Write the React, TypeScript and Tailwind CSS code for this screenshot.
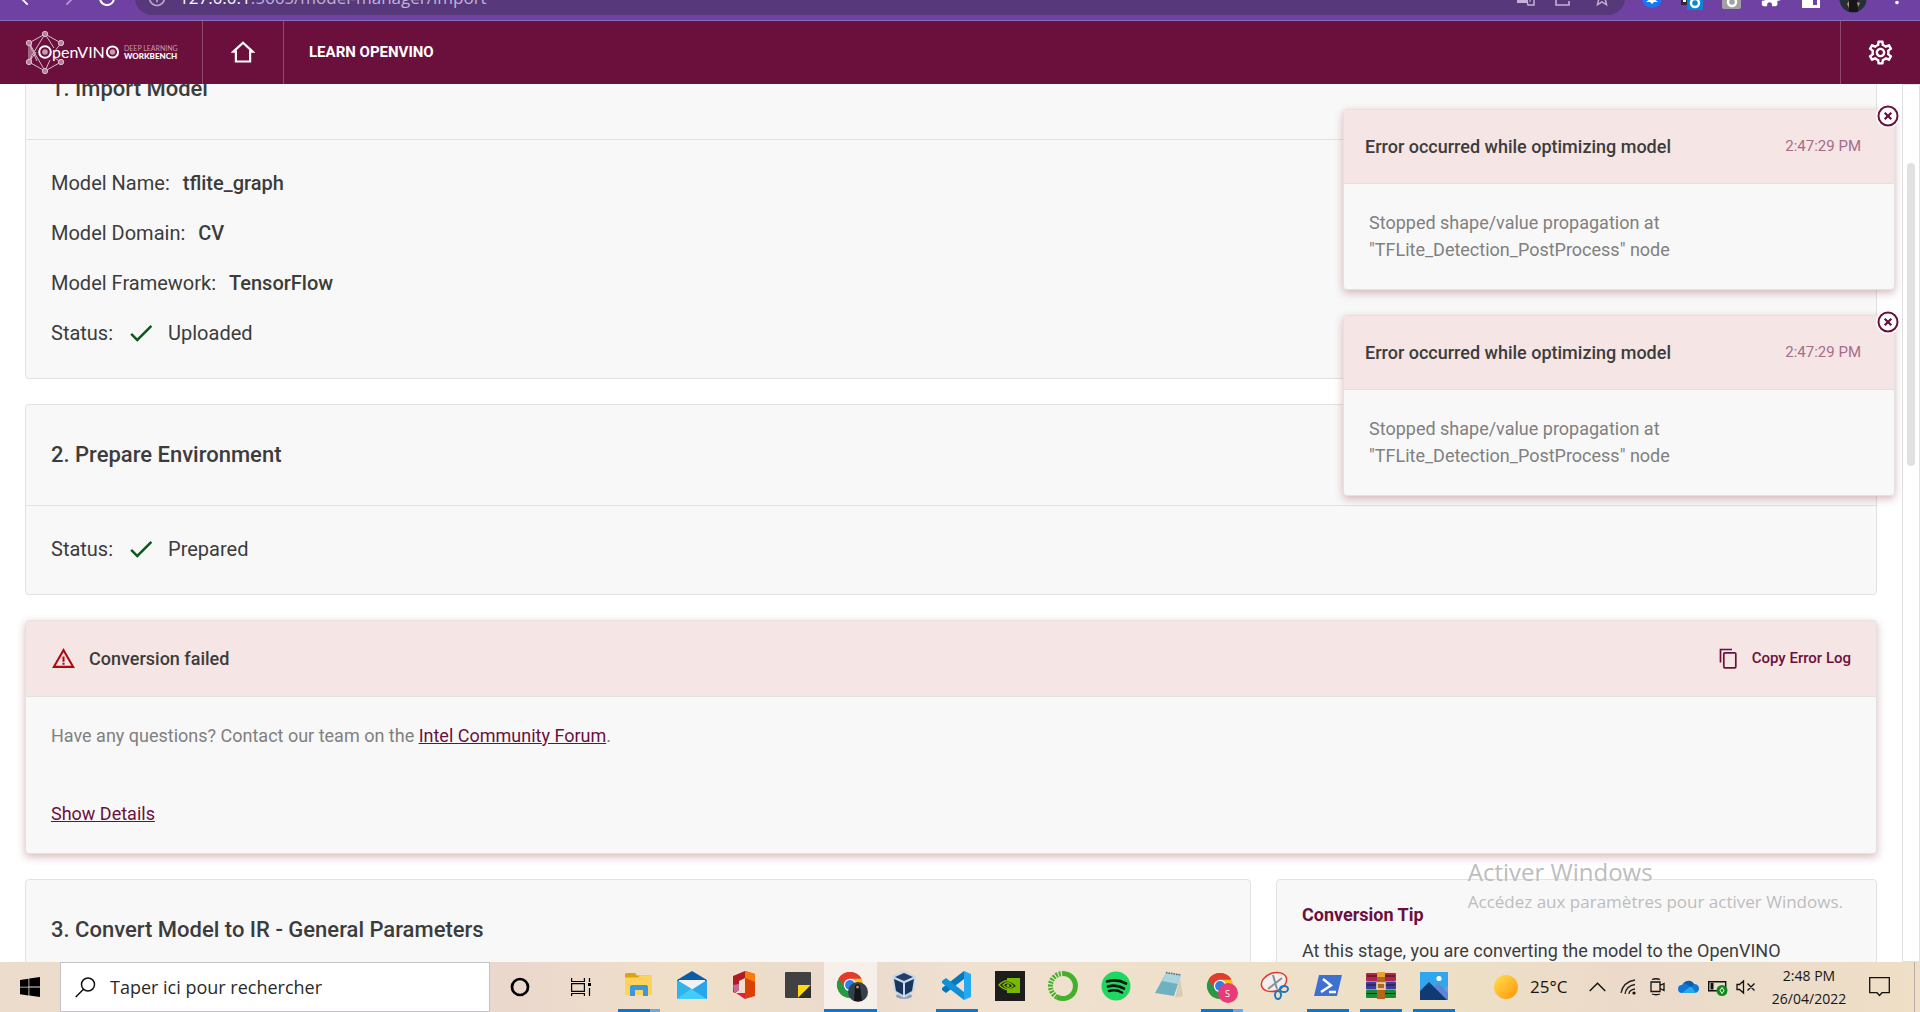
import type { ReactNode } from 'react';
import { MdArrowBack, MdArrowForward, MdRefresh, MdInfoOutline, MdOutlineSettings, MdCheck, MdWarningAmber, MdExtension, MdStarBorder, MdMoreVert } from 'react-icons/md';

const ROBOTO = "font-[Roboto,'Liberation_Sans',sans-serif]";
const SEGOE = "font-['Open_Sans','Noto_Sans',sans-serif]";

function BrowserBar() {
  return (
    <div className={`flex h-[21px] shrink-0 items-end overflow-hidden border-b border-[#8d6cb8] bg-[#6e41a2] text-white ${SEGOE}`}>
      <div className="flex h-9 w-[135px] items-center justify-between pr-4 pl-4 pb-2">
        <button aria-label="Back"><MdArrowBack size={22} /></button>
        <button aria-label="Forward" className="text-[#b39bd0]"><MdArrowForward size={22} /></button>
        <button aria-label="Reload"><MdRefresh size={24} /></button>
      </div>
      <div className="mb-[5px] flex h-[34px] flex-1 items-center rounded-full bg-[#57387b] pr-3 pl-3 text-[#c3b3d6]">
        <MdInfoOutline size={20} className="text-[#b8a8c8]" />
        <span className="ml-3 text-[17px] leading-6"><span className="text-white">127.0.0.1</span>:5665/model-manager/import</span>
        <span className="ml-auto flex items-center gap-5">
          <svg width="18" height="20" viewBox="0 0 18 20"><path d="M0 2h11v13H0z" fill="#c3b3d6" /><path d="M8 6h9v11h-6z" fill="none" stroke="#c3b3d6" strokeWidth="1.5" /><path d="M11 10h4M13 10v4" stroke="#c3b3d6" /></svg>
          <svg width="16" height="20" viewBox="0 0 16 20" fill="none" stroke="#c3b3d6" strokeWidth="1.600"><path d="M6 3H1v14h13v-4M5 12q1-6 7-6M9 3l4 3-4 3" /></svg>
          <MdStarBorder size={22} />
        </span>
      </div>
      <div className="flex h-10 w-[295px] items-center justify-between pr-3 pl-[17px] pb-[3px]">
        <svg width="20" height="30" viewBox="0 0 20 30"><circle cx="10" cy="14" r="10" fill="#1877f2" /><path d="M10 9l2 6 4 3-4 0-2 2-2-2H4l4-3z" fill="#fff" /></svg>
        <svg width="22" height="24" viewBox="0 0 22 24"><path d="M0 2h9v16H0z" fill="#2b2b3a" /><path d="M2 6h3v9H2z" fill="#fff" /><path d="M6 6h16v17H6z" fill="#0a84d8" /><circle cx="14" cy="16" r="4" fill="none" stroke="#fff" strokeWidth="2.5" /></svg>
        <svg width="19" height="24" viewBox="0 0 19 24"><rect width="19" height="22" rx="2" fill="#a3a0a3" /><circle cx="10" cy="15" r="4" fill="none" stroke="#fff" strokeWidth="2.5" /></svg>
        <MdExtension size={22} className="mb-1" />
        <svg width="18" height="24" viewBox="0 0 18 24"><path d="M1.500 3h15v16.500h-15z" fill="none" stroke="#fff" strokeWidth="3" /><path d="M9 3h7v11H9z" fill="#fff" /><path d="M11 4h4v13h-4z" fill="#6e41a2" /><path d="M2 4h9v15H2z" fill="#fff" /></svg>
        <svg width="28" height="28" viewBox="0 0 28 28"><circle cx="14" cy="14" r="13.5" fill="#22303a" /><path d="M10 12h9v15h-9z" fill="#15161c" /><path d="M8 19l2-3v7zM18 17l3 1-2 4z" fill="#c98b6a" /></svg>
        <MdMoreVert size={22} className="mb-1" />
      </div>
    </div>
  );
}

function Logo() {
  return (
    <svg width="154" height="46" viewBox="0 0 154 46" className="text-white" fill="none" role="img" aria-label="OpenVINO Deep Learning Workbench">
      <g stroke="#d9bccb" strokeWidth="1">
        <path d="M21 4L5 13v19l16 9 16-9M21 4l16 9" />
        <path d="M21 4L10 22l11 19M21 4l9 14M5 13l5 8-5 11M5 13l8 18M37 13l-6 8M37 32l-8-5M5 32l7-10M7 13v18M21 41l5-11" />
      </g>
      <g fill="#b4809a" stroke="#d9bccb">
        <circle cx="21" cy="4" r="2.7" /><circle cx="5" cy="13" r="2.7" /><circle cx="37" cy="13" r="2.7" />
        <circle cx="5" cy="32" r="2.7" /><circle cx="37" cy="32" r="2.7" /><circle cx="21" cy="41" r="2.7" />
      </g>
      <circle cx="21" cy="22" r="5.800" fill="#6b103c" stroke="#fff" strokeWidth="2" />
      <circle cx="21" cy="22" r="2.8" fill="#c79bb0" />
      <text x="28" y="28" fill="#fff" fontFamily="Lato, sans-serif" fontSize="16">penVIN</text>
      <circle cx="88.500" cy="22" r="5.600" stroke="#fff" strokeWidth="2" />
      <circle cx="88.500" cy="22" r="2.8" fill="#c79bb0" />
      <text x="100" y="21" fill="#c79bb0" fontFamily="Lato, sans-serif" fontSize="7">DEEP LEARNING</text>
      <text x="100" y="28.500" fill="#fff" fontFamily="Lato, sans-serif" fontSize="8" fontWeight="900">WORKBENCH</text>
    </svg>
  );
}

function AppHeader() {
  return (
    <header className="flex h-[63px] shrink-0 items-stretch bg-[#6b103c] text-white">
      <a href="#home" className="flex w-[203px] items-center border-r border-[#8f4a6b] pl-6"><Logo /></a>
      <a href="#start" aria-label="Home" className="flex w-[81px] items-center justify-center border-r border-[#8f4a6b]">
        <svg width="24" height="24" viewBox="0 0 24 24" fill="none" stroke="#fff" strokeWidth="2.2"><path d="M12 1.7L2.400 10.600h2.500V20.500h14.200v-9.900h2.500z" /></svg>
      </a>
      <nav className="flex items-center pl-[25px]">
        <a href="#learn" className="text-[15px] font-bold">LEARN OPENVINO</a>
      </nav>
      <button aria-label="Settings" className="ml-auto flex w-20 items-center justify-center border-l border-[#8f4a6b]"><MdOutlineSettings size={29} /></button>
    </header>
  );
}

function Card({ title, children }: { title: string; children?: ReactNode }) {
  return (
    <section className="rounded-[4px] border border-[#e2e2e2] bg-[#f8f8f8]">
      <h2 className="flex h-[101px] items-center border-b border-[#e2e2e2] px-[25px] pb-0.5 text-[22px] font-medium">{title}</h2>
      {children}
    </section>
  );
}

function Field({ label, value }: { label: string; value: string }) {
  return (
    <div className="flex h-[50px] items-center gap-[13px]">
      <dt>{label}:</dt>
      <dd className="font-medium">{value}</dd>
    </div>
  );
}

function Status({ value }: { value: string }) {
  return (
    <div className="flex h-[50px] items-center gap-[13px]">
      <dt>Status:</dt>
      <dd className="flex items-center gap-3"><MdCheck size={30} className="text-[#0b5a1c]" />{value}</dd>
    </div>
  );
}

function ErrorCard() {
  return (
    <section className="rounded-[4px] border border-[#e2e2e2] bg-[#f8f8f8] shadow-[0_3px_8px_rgba(130,30,40,0.3)]">
      <div className="flex h-[76px] items-center border-b border-[#e2e2e2] bg-[#f5e5e4] px-[25px]">
        <MdWarningAmber size={25} className="text-[#b00a0f]" />
        <h3 className="ml-[13px] text-[18px] font-medium">Conversion failed</h3>
        <button className="ml-auto flex items-center gap-[15px] text-[15px] font-medium text-[#6b103c]">
          <svg width="18" height="21" viewBox="0 0 18 21" fill="none" stroke="currentColor" strokeWidth="1.7"><path d="M13 1.5H1.5v13" /><rect x="4.8" y="4.8" width="12" height="15" rx="1" /></svg>
          Copy Error Log
        </button>
      </div>
      <div className="px-[25px] pt-[27px] pb-[27px] text-[18px] leading-6 text-[#808080]">
        <p>Have any questions? Contact our team on the <a href="#forum" className="text-[#6b103c] underline">Intel Community Forum</a>.</p>
        <button className="mt-[54px] text-[#6b103c] underline">Show Details</button>
      </div>
    </section>
  );
}

function Toast() {
  return (
    <section role="alert" className="relative rounded-[4px] border border-[#e2e2e2] bg-[#f8f8f8] shadow-[0_3px_8px_rgba(130,30,40,0.3)]">
      <div className="flex h-[74px] items-center justify-between border-b border-[#e2e2e2] bg-[#f5e5e4] pr-[33px] pb-px pl-[21px]">
        <h3 className="text-[18px] font-medium">Error occurred while optimizing model</h3>
        <time className="text-[15px] text-[#a56c8b]">2:47:29 PM</time>
      </div>
      <p className="w-[380px] pt-[25px] pb-[26px] pl-[25px] text-[18px] leading-[27px] text-[#808080]">Stopped shape/value propagation at "TFLite_Detection_PostProcess" node</p>
      <button aria-label="Close" className="absolute -top-1.5 -right-1.5 rounded-full bg-white">
        <svg width="24" height="24" viewBox="0 0 24 24" fill="none" stroke="#6b103c" strokeWidth="2"><circle cx="12" cy="12" r="9.5" /><path d="M8.7 8.7l6.6 6.6M15.3 8.7l-6.6 6.6" strokeWidth="2.2" /></svg>
      </button>
    </section>
  );
}

function ChromeMark() {
  return (
    <g>
      <circle cx="13" cy="14" r="13" fill="#fbc116" />
      <path d="M13 14L1.7 7.5A13 13 0 0 1 24.3 7.5H13z" fill="#e33b2e" />
      <path d="M1.7 7.5A13 13 0 0 0 13 27l5.6-9.7L13 14z" fill="#279847" />
      <path d="M13 7.5h11.3A13 13 0 0 0 1.7 7.5L7 16z" fill="#e33b2e" />
      <circle cx="13" cy="14" r="6.2" fill="#fff" />
      <circle cx="13" cy="14" r="4.9" fill="#2f7de9" />
    </g>
  );
}

type AppIcon = { name: string; run?: 'one' | 'many' | 'active'; art: ReactNode };

const APPS: AppIcon[] = [
  { name: 'File Explorer', run: 'many', art: <><path d="M1 5V3.500Q1 2 2.500 2H11l2 2.500h14V24H1z" fill="#e0a30f" /><path d="M1 6.500h13l2-2h12V24H1z" fill="#fdd35c" /><path d="M6 25V16q0-2 2-2h14q2 0 2 2v9h-5v-6h-8v6z" fill="#3c98dd" /></> },
  { name: 'Mail', art: <><path d="M0 9L15 0l15 9v4H0z" fill="#0a5ca8" /><path d="M2 9h26v10H2z" fill="#f2f2f2" /><path d="M0 9l15 9L0 28z" fill="#30b4f0" /><path d="M30 9v19H0z" fill="#2aa5ea" /><path d="M15 18.500L30 28H0z" fill="#41cdf7" /></> },
  { name: 'Office', art: <><path d="M15 0l10 3v22l-10 3z" fill="#dc3e08" /><path d="M15 0l10 3v8l-10-4z" fill="#f77a0c" /><path d="M15 0v7l-6 3v9l-4 3-2-1V5z" fill="#b01a22" /><path d="M3 14l6-1v6l-5 3z" fill="#c9679a" /><path d="M6 22h9v6z" fill="#df1f3f" /></> },
  { name: 'Sticky Notes', art: <><rect x="2" y="1" width="26" height="26" rx="1" fill="#414141" /><path d="M15 27V14h13z" fill="#ffd90d" /><path d="M15 27l13-13v13z" fill="#2f2f2f" /></> },
  { name: 'Chrome', run: 'active', art: <g transform="translate(1 0)"><ChromeMark /><circle cx="21" cy="21" r="10" fill="#33424a" /><path d="M18 15q3-4 5 0l2 15h-8z" fill="#15151a" /><circle cx="20.500" cy="16" r="1.500" fill="#c78b71" /></g> },
  { name: 'VirtualBox', art: <><ellipse cx="15" cy="25" rx="8" ry="3" fill="#8fa1b7" /><path d="M15 0l12 5-2 16-10 6-10-6L3 5z" fill="#c9d8e8" /><path d="M15 2l9 4-9 4-9-4z" fill="#233f68" /><path d="M5 8l9 4v12l-7-4zM25 8l-9 4v12l7-4z" fill="#17355f" /></> },
  { name: 'Visual Studio Code', run: 'one', art: <><path d="M22 0l7 3v23l-7 3z" fill="#27a9f2" /><path d="M22 0v8L4 22l-4-3v-2z" fill="#0877b9" /><path d="M22 29v-8L4 7 0 10v2z" fill="#1090d7" /></> },
  { name: 'NVIDIA', art: <><path d="M0 0h30v30H0z" fill="#1d1d1b" /><path d="M12 7h13v15H12z" fill="#76b900" /><path d="M4 14q8-9 18 1-9 8-18-1z" fill="#1d1d1b" stroke="#76b900" strokeWidth="1.500" /><path d="M8 14q5-5 10 1-5 5-10-1z" fill="none" stroke="#76b900" strokeWidth="1.500" /><circle cx="13" cy="14.500" r="1.600" fill="#76b900" /></> },
  { name: 'Anaconda', art: <><path d="M15 2.500a12.500 12.500 0 1 1-6 23.500" fill="none" stroke="#43b02a" strokeWidth="5" /><path d="M9 26A12.500 12.500 0 0 1 15 2.500" fill="none" stroke="#43b02a" strokeWidth="5" strokeDasharray="2 1.200" /></> },
  { name: 'Spotify', art: <><circle cx="15" cy="15" r="14.500" fill="#1ed760" /><path d="M6 10.500q10-3 19 2M7 15.500q8-2.500 16 2M8 20q7-2 13 1.500" fill="none" stroke="#111" strokeWidth="2.600" strokeLinecap="round" /></> },
  { name: 'Notepad', art: <><path d="M12 1l14 3 3 20-6 3z" fill="#eee9dc" /><path d="M12 2l15 2-7 21L1 22z" fill="#6fb0c2" /><path d="M12 2l15 2-3 9L8 10z" fill="#a9d5de" /><path d="M26 6l3 19-8 2z" fill="#d8cdb4" /><path d="M12 1.500l15 2.500" stroke="#55606a" strokeWidth="1.500" strokeDasharray="1.500 1" /></> },
  { name: 'Chrome profile', run: 'many', art: <g transform="translate(0 1)"><ChromeMark /><circle cx="21" cy="21" r="10" fill="#e93b78" /><text x="18" y="24.500" fontSize="9" fontFamily="Open Sans, sans-serif" fill="#fff">S</text></g> },
  { name: 'Snipping Tool', art: <><ellipse cx="14" cy="11" rx="13" ry="9" transform="rotate(-20 14 11)" fill="#f3efec" stroke="#e5342f" strokeWidth="1.500" /><path d="M13 4l4 14M8 18L22 7" stroke="#84929b" strokeWidth="2" /><ellipse cx="24" cy="18" rx="4" ry="3" fill="none" stroke="#1978c2" strokeWidth="2" /><ellipse cx="18" cy="24" rx="3" ry="4" fill="none" stroke="#1978c2" strokeWidth="2" /></> },
  { name: 'PowerShell', run: 'one', art: <><path d="M6 4h23l-5 21H1z" fill="#3e71cf" /><path d="M10 8l8 6.500L8 21M16 21h7" fill="none" stroke="#fff" strokeWidth="2.400" /></> },
  { name: 'WinRAR', run: 'one', art: <><rect y="2" width="30" height="8" rx="1" fill="#b3264c" /><rect y="10.500" width="30" height="8" rx="1" fill="#3b3da3" /><rect y="19" width="30" height="8" rx="1" fill="#1c8a35" /><path d="M1 5h28M1 14h28M1 22.500h28" stroke="#26191b" strokeWidth="1.200" /><path d="M11 1h8v27h-8z" fill="#b5651e" /><rect x="11" y="12" width="8" height="6" fill="#b5651e" stroke="#f5e2c0" strokeWidth="1.500" /><path d="M11 1h8v5h-8z" fill="#e4a438" /></> },
  { name: 'Photos', run: 'one', art: <><path d="M1 1h28v28H1z" fill="#2fa6ee" /><path d="M29 14v15H15z" fill="#7896df" /><path d="M13 18l6-6 10 10v7H8z" fill="#5b86d6" /><path d="M1 20l9-9 18 18H1z" fill="#123a72" /><circle cx="20" cy="7.500" r="2.600" fill="#fff" /></> },
];

function TaskbarApp({ name, run, art }: AppIcon) {
  return (
    <button aria-label={name} className={run === 'active' ? 'flex w-[53px] flex-col items-center bg-[#f7f0ea]' : 'flex w-[53px] flex-col items-center'}>
      <span className="flex flex-1 items-center"><svg width="30" height="30" viewBox="0 0 30 30" className="overflow-visible">{art}</svg></span>
      {run === 'active' && <span className="h-[3px] w-full bg-[#0878d7]" />}
      {run === 'one' && <span className="h-[3px] w-[42px] bg-[#0878d7]" />}
      {run === 'many' && <span className="h-[3px] w-[42px] border-r-[10px] border-[#6aaae2] bg-[#0878d7]" />}
      {!run && <span className="h-[3px]" />}
    </button>
  );
}

function Taskbar() {
  return (
    <footer className={`flex h-[50px] shrink-0 items-stretch bg-[linear-gradient(90deg,#ecdccb_0%,#ead8cd_27%,#f0e0c8_36%,#e9dacd_44%,#f0e0d0_50%,#eee0c6_75%,#ebdac9_84%,#ecdcc9_93%,#efdfc6_100%)] text-[#151515] ${SEGOE}`}>
      <button aria-label="Start" className="flex w-[60px] items-center justify-center">
        <svg width="20" height="20" viewBox="0 0 20 20"><path d="M0 3l8.500-1.300v8H0zM9.300 1.500L20 0v9.600H9.300zM0 10.500h8.500v8L0 17.200zM9.300 10.500H20V20L9.300 18.600z" fill="#000" /></svg>
      </button>
      <label className="flex w-[430px] items-center border border-[#c5c2c5] bg-white pl-3.5">
        <svg width="21" height="21" viewBox="0 0 21 21" fill="none" stroke="#111" strokeWidth="1.500"><circle cx="13" cy="7.500" r="6.500" /><path d="M8.500 12.200L.7 20" /></svg>
        <input aria-label="Rechercher" placeholder="Taper ici pour rechercher" className="ml-3.5 flex-1 text-[18px] placeholder:text-[#2a2a2a]" />
      </label>
      <button aria-label="Cortana" className="flex w-[60px] items-center justify-center"><svg width="20" height="20" viewBox="0 0 20 20"><circle cx="10" cy="10" r="8" fill="none" stroke="#000" strokeWidth="2.700" /></svg></button>
      <button aria-label="Task view" className="flex w-[62px] items-center justify-center">
        <svg width="20" height="20" viewBox="0 0 20 20" fill="none" stroke="#000" strokeWidth="1.200"><path d="M.6 1v3.500h12.800V1M.6 6.600h12.800v7.800H.6zM.6 19v-2.500h12.800V19M18.500 1v4M18.500 11v8" /><path d="M17 6h3v3h-3z" fill="#000" stroke="none" /></svg>
      </button>
      <div className="flex">{APPS.map((a) => <TaskbarApp key={a.name} {...a} />)}</div>
      <div className="ml-auto flex items-center">
        <svg width="24" height="24" viewBox="0 0 24 24"><defs><linearGradient id="sun" x1="0" y1="0" x2="1" y2="1"><stop offset="0" stopColor="#ffe04e" /><stop offset="1" stopColor="#ff9408" /></linearGradient></defs><circle cx="12" cy="12" r="12" fill="url(#sun)" /></svg>
        <span className="w-[63px] pl-3 text-[17px] whitespace-nowrap">25°C</span>
        <button aria-label="Show hidden icons" className="flex w-8 justify-center"><svg width="17" height="10" viewBox="0 0 17 10" fill="none" stroke="#111" strokeWidth="1.400"><path d="M.7 9l7.800-7.800L16.300 9" /></svg></button>
        <span className="flex w-[30px] justify-center"><svg width="17" height="16" viewBox="0 0 17 16" fill="none" stroke="#222" strokeWidth="1.300"><path d="M1 14Q3 3 15 1M5 15q1-8 10-9.500M9 15q0-4 6-5" /><circle cx="14" cy="14" r="1.600" fill="#111" stroke="none" /></svg></span>
        <span className="flex w-[30px] justify-center"><svg width="16" height="18" viewBox="0 0 16 18" fill="none" stroke="#111" strokeWidth="1.300"><path d="M1 4h9v9.500H1zM10 7.500l4-2v7l-4-2M2 1.500q4-1.500 8 0M2 16q4 1.500 8 0" /></svg></span>
        <span className="flex w-[30px] justify-center"><svg width="21" height="14" viewBox="0 0 21 14"><path d="M4 13a4 4 0 0 1 0-8 7 7 0 0 1 12-1 4.500 4.500 0 0 1 1 9z" fill="#0f78d4" /><path d="M4 13l9-7 5 7z" fill="#28a8ea" /><path d="M6 3a6 6 0 0 1 10 1l-3 3z" fill="#0a5bab" /></svg></span>
        <span className="flex w-[30px] justify-center"><svg width="20" height="18" viewBox="0 0 20 18"><path d="M.7 3.700h17v9H.7z" fill="none" stroke="#111" strokeWidth="1.400" /><path d="M2.500 5h3v6.500h-3z" fill="#111" /><circle cx="14" cy="12.500" r="5.500" fill="#10891b" /><path d="M14 9.500l2 3-2 3-2-3z" fill="none" stroke="#fff" /></svg></span>
        <span className="flex w-[26px] justify-center"><svg width="20" height="16" viewBox="0 0 20 16" fill="none" stroke="#111" strokeWidth="1.300"><path d="M1 5.500h2.500L7.500 2v12l-4-3.500H1zM11.500 4.500l7 7M18.500 4.500l-7 7" /></svg></span>
        <span className="w-[100px] text-center text-[14px] leading-[23px]">2:48 PM<br />26/04/2022</span>
        <button aria-label="Notifications" className="flex w-10 justify-center"><svg width="21" height="20" viewBox="0 0 21 20" fill="none" stroke="#111" strokeWidth="1.300"><path d="M.7.700h19.600v15H13l-2.500 2.800L8 15.700H.7z" /></svg></button>
        <span className="ml-[15px] h-[50px] w-1.5 border-l border-[#b9aea3]" />
      </div>
    </footer>
  );
}

export default function App() {
  return (
    <div className={`relative flex h-screen flex-col overflow-hidden bg-white text-[#3c3c3c] ${ROBOTO}`}>
      <BrowserBar />
      <AppHeader />
      <div className="relative flex min-h-0 flex-1 overflow-hidden">
        <main className="-mt-[46px] flex min-w-0 flex-1 flex-col gap-[25px] pr-[25px] pl-[25px] text-[20px]">
          <Card title="1. Import Model">
            <dl className="px-[25px] pt-[18px] pb-5">
              <Field label="Model Name" value="tflite_graph" />
              <Field label="Model Domain" value="CV" />
              <Field label="Model Framework" value="TensorFlow" />
              <Status value="Uploaded" />
            </dl>
          </Card>
          <Card title="2. Prepare Environment">
            <dl className="px-[25px] pt-[18px] pb-5"><Status value="Prepared" /></dl>
          </Card>
          <ErrorCard />
          <div className="flex items-stretch gap-[25px]">
            <div className="min-w-0 flex-1"><Card title="3. Convert Model to IR - General Parameters" /></div>
            <aside className="w-[601px] rounded-[4px] border border-[#e2e2e2] bg-[#f8f8f8] px-[25px] pt-[21px] pb-5 text-[18px]">
              <h3 className="leading-7 font-bold text-[#6b103c]">Conversion Tip</h3>
              <p className="mt-2 leading-7">At this stage, you are converting the model to the OpenVINO</p>
            </aside>
          </div>
        </main>
        <div className="flex w-[18px] justify-center border border-[#e2e2e2] bg-white pt-[78px]"><div className="h-[303px] w-2 rounded-full bg-[#e1e1e1]" /></div>
        <div className="absolute top-[25px] right-[25px] flex w-[552px] flex-col gap-[25px]">
          <Toast />
          <Toast />
        </div>
        <div className={`pointer-events-none absolute right-[77px] bottom-[46px] text-[#bdbdbd] ${SEGOE}`}>
          <p className="text-[24px] leading-8">Activer Windows</p>
          <p className="text-[17px] leading-7">Accédez aux paramètres pour activer Windows.</p>
        </div>
      </div>
      <Taskbar />
    </div>
  );
}
